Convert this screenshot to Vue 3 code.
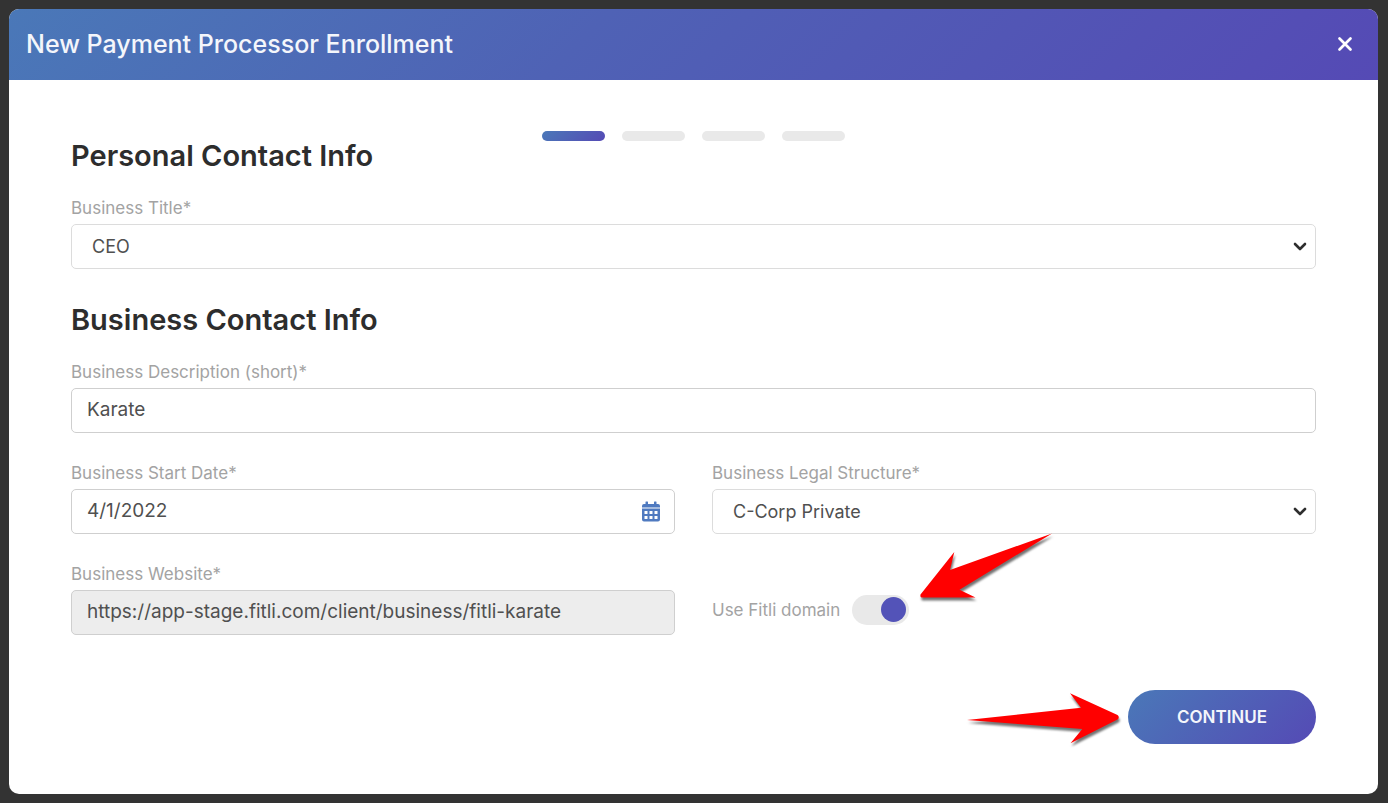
<script setup>
import { ref } from 'vue'

const steps = [1, 2, 3, 4]
const currentStep = ref(1)
const businessTitle = ref('CEO')
const description = ref('Karate')
const startDate = ref('4/1/2022')
const legalStructure = ref('C-Corp Private')
const website = ref('https://app-stage.fitli.com/client/business/fitli-karate')
const useDomain = ref(true)
</script>

<template>
  <main class="modal" role="dialog" aria-labelledby="modal-title">
    <header class="modal-header">
      <h1 id="modal-title">New Payment Processor Enrollment</h1>
      <button type="button" class="close" aria-label="Close">
        <svg width="16" height="16" viewBox="0 0 16 16" aria-hidden="true">
          <path d="M2.500 2.500 13.500 13.500M13.500 2.500 2.500 13.500" fill="none" stroke="#fff" stroke-width="2.700" stroke-linecap="round" />
        </svg>
      </button>
    </header>

    <form class="modal-body" @submit.prevent>
      <div class="steps">
        <span v-for="s in steps" :key="s" class="step" :class="{ active: s === currentStep }"></span>
      </div>

      <h2>Personal Contact Info</h2>
      <div class="field">
        <label for="title">Business Title*</label>
        <div class="control">
          <select id="title" v-model="businessTitle">
            <option>CEO</option>
            <option>Owner</option>
          </select>
          <svg class="chevron" width="14" height="9" viewBox="0 0 14 9" aria-hidden="true">
            <path d="M2 2 7 7 12 2" />
          </svg>
        </div>
      </div>

      <h2 class="second">Business Contact Info</h2>
      <div class="grid">
        <div class="field wide">
          <label for="description">Business Description (short)*</label>
          <input id="description" v-model="description" type="text" />
        </div>

        <div class="field">
          <label for="start-date">Business Start Date*</label>
          <div class="control">
            <input id="start-date" v-model="startDate" type="text" />
            <button type="button" class="calendar" aria-label="Choose date">
              <svg width="18" height="21" viewBox="0 0 18 21" aria-hidden="true">
                <path
                  fill="#4f7ac0"
                  fill-rule="evenodd"
                  d="M4 0.5h1.5a.5.5 0 0 1 .5.5v2h6V1a.5.5 0 0 1 .5-.5H14a.5.5 0 0 1 .5.5v2H16a2 2 0 0 1 2 2v1.5H0V5a2 2 0 0 1 2-2h1.500V1a.5.5 0 0 1 .5-.5zM0 7.500h18V18.500a2 2 0 0 1-2 2H2a2 2 0 0 1-2-2zM2.500 10v3h3v-3zM7.500 10v3h3v-3zM12.500 10v3h3v-3zM2.500 15v3h3v-3zM7.500 15v3h3v-3zM12.500 15v3h3v-3z"
                />
              </svg>
            </button>
          </div>
        </div>

        <div class="field">
          <label for="structure">Business Legal Structure*</label>
          <div class="control">
            <select id="structure" v-model="legalStructure">
              <option>C-Corp Private</option>
              <option>LLC</option>
            </select>
            <svg class="chevron" width="14" height="9" viewBox="0 0 14 9" aria-hidden="true">
              <path d="M2 2 7 7 12 2" />
            </svg>
          </div>
        </div>

        <div class="field">
          <label for="website">Business Website*</label>
          <input id="website" v-model="website" type="text" readonly />
        </div>

        <div class="toggle-row">
          <label for="use-domain">Use Fitli domain</label>
          <div class="toggle">
            <input id="use-domain" v-model="useDomain" type="checkbox" />
            <svg class="arrow arrow-toggle" width="140" height="74" viewBox="0 0 140 74" aria-hidden="true">
              <path d="M132 .5 30 37 34.300 19 .5 61.500Q0 64 1.500 64.500H55.500L39.500 56.700Z" />
            </svg>
          </div>
        </div>
      </div>

      <footer class="actions">
        <div class="action">
          <svg class="arrow arrow-continue" width="158" height="60" viewBox="0 0 158 60" aria-hidden="true">
            <path d="M0 28 114 15.700 103 1.300 150.500 23Q153 25 150.500 27.500L103.500 51.300 115.300 37Z" />
          </svg>
          <button type="submit" class="continue">CONTINUE</button>
        </div>
      </footer>
    </form>
  </main>
</template>

<style>
html,
body {
  background: #333;
}
</style>

<style scoped>
* {
  box-sizing: border-box;
}

.modal {
  --brand: linear-gradient(135deg, #4a78b8 0%, #4f62b5 42%, #554ab5 100%);
  display: flex;
  flex-direction: column;
  min-height: calc(100vh - 18px);
  margin: 9px 10px 9px 9px;
  border-radius: 10px;
  overflow: hidden;
  background: #fff;
  font-family: Inter, "Open Sans", sans-serif;
  color: #2d2d2d;
}

.modal-header {
  display: flex;
  align-items: center;
  justify-content: space-between;
  height: 71px;
  padding: 0 25px 1px 17px;
  background: var(--brand);
}

h1 {
  margin: 0;
  font-size: 25px;
  font-weight: 500;
  line-height: 30px;
  color: #f4f6fb;
}

.close {
  display: flex;
  padding: 0;
  border: 0;
  background: none;
}

.modal-body {
  padding: 51px 62px 50px;
}

.steps {
  display: flex;
  justify-content: center;
  gap: 17px;
}

.step {
  width: 63px;
  height: 10px;
  border-radius: 5px;
  background: #e9e9e9;
}

.step.active {
  background: linear-gradient(135deg, #4a78b8, #554ab5);
}

h2 {
  margin: 0 0 27px;
  font-size: 29px;
  font-weight: 600;
  line-height: 30px;
}

h2.second {
  margin-top: 36px;
}

.grid {
  display: grid;
  grid-template-columns: 1fr 1fr;
  gap: 30px 37px;
}

.wide {
  grid-column: 1 / -1;
}

.field {
  display: flex;
  flex-direction: column;
  gap: 6px;
}

label {
  font-size: 17px;
  line-height: 20px;
  color: #a3a3a3;
}

.control {
  position: relative;
}

input[type='text'],
select {
  display: block;
  width: 100%;
  height: 45px;
  margin: 0;
  padding: 0 15px 3px;
  border: 1px solid #cfcfcf;
  border-radius: 5px;
  outline: 0;
  background: #fff;
  font-family: inherit;
  font-size: 19px;
  color: #505050;
}

select {
  appearance: none;
  padding: 0 20px;
  border-color: #dcdcdc;
  font-size: 18px;
}

input[readonly] {
  background: #ededed;
}

.chevron {
  position: absolute;
  top: 18px;
  right: 9px;
  pointer-events: none;
}

.chevron path {
  fill: none;
  stroke: #2e2e2e;
  stroke-width: 2.6;
  stroke-linecap: round;
  stroke-linejoin: round;
}

.calendar {
  position: absolute;
  top: 12px;
  right: 15px;
  display: flex;
  padding: 0;
  border: 0;
  background: none;
}

.toggle-row {
  display: flex;
  align-items: center;
  gap: 12px;
  padding-top: 20px;
}

.toggle {
  position: relative;
  display: flex;
}

.toggle input {
  appearance: none;
  display: flex;
  align-items: center;
  width: 57px;
  height: 30px;
  margin: 0;
  padding: 0 3px;
  border-radius: 15px;
  background: #e9e9e9;
}

.toggle input::before {
  content: '';
  width: 25px;
  height: 25px;
  border-radius: 50%;
  background: #5353b8;
}

.toggle input:checked {
  justify-content: flex-end;
}

.arrow {
  position: absolute;
  overflow: visible;
  pointer-events: none;
}

.arrow path {
  fill: #f00;
  filter: drop-shadow(1px 3px 1px rgba(0, 0, 0, 0.55));
}

.arrow-toggle {
  left: 68px;
  bottom: 18px;
}

.arrow-continue {
  top: 2px;
  right: 191px;
}

.actions {
  display: flex;
  justify-content: flex-end;
  margin-top: 55px;
}

.action {
  position: relative;
}

.continue {
  width: 188px;
  height: 54px;
  border: 0;
  border-radius: 27px;
  background: linear-gradient(135deg, #4a78b8, #554ab5);
  font-family: inherit;
  font-size: 17px;
  font-weight: 600;
  color: #f4f6fb;
}
</style>
